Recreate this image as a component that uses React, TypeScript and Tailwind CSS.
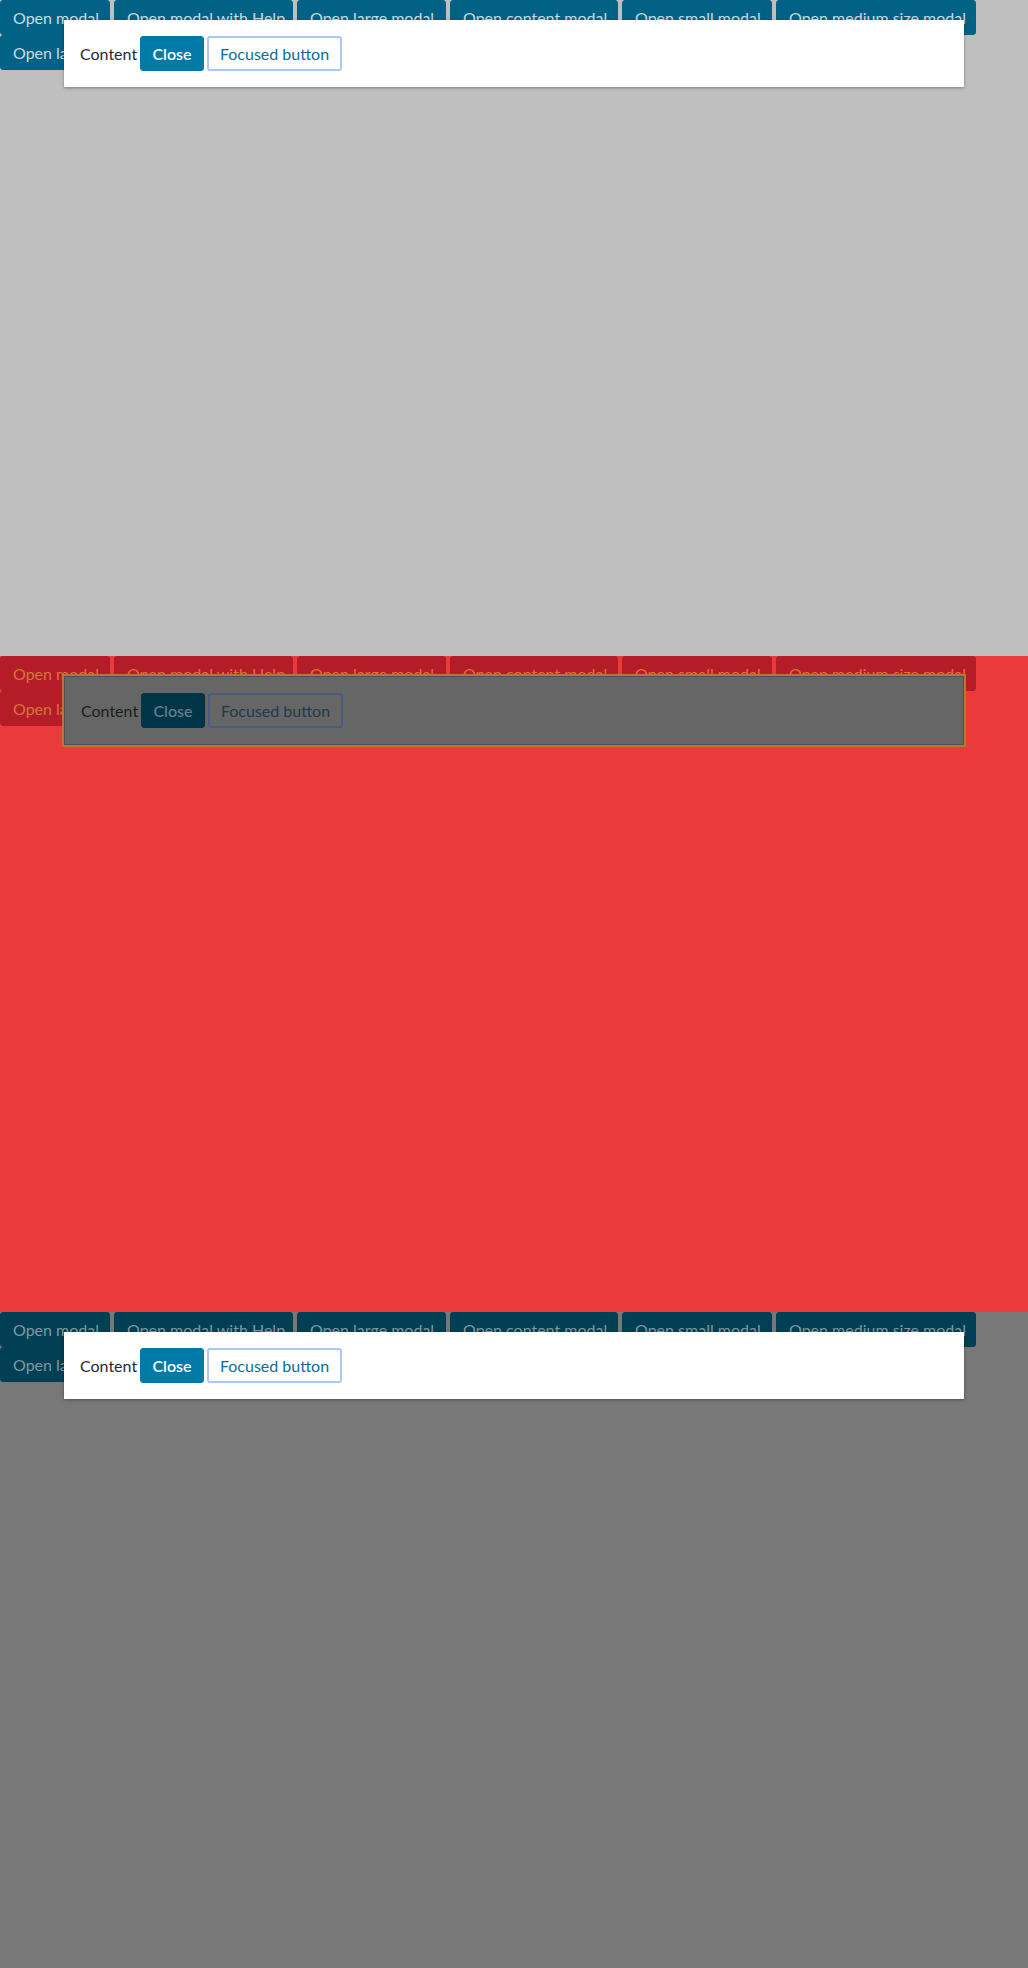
import React from 'react';

type Theme = {
  page: string;
  trigger: string;
  modal: string;
  content: string;
  close: string;
  focused: string;
};

const TRIGGERS = [
  { label: 'Open modal', width: 'w-[110px]' },
  { label: 'Open modal with Help', width: 'w-[179px]' },
  { label: 'Open large modal', width: 'w-[149px]' },
  { label: 'Open content modal', width: 'w-[168px]' },
  { label: 'Open small modal', width: 'w-[150px]' },
  { label: 'Open medium size modal', width: 'w-[200px]' },
  { label: 'Open large content modal', width: 'w-[196px]' },
];

const themes: Theme[] = [
  {
    page: 'bg-[#bfbfbf]',
    trigger: 'bg-[#016285] border-[#016285] text-[#c9dbe2]',
    modal: 'bg-white shadow-[0_1px_3px_rgba(0,0,0,0.35)]',
    content: 'text-[#1f2a33]',
    close: 'bg-[#007ba7] border-[#007ba7] text-white',
    focused: 'bg-white border-[#a8c7fa] text-[#0a6e96]',
  },
  {
    page: 'bg-[#ea3a3a]',
    trigger: 'bg-[#b41d28] border-[#b41d28] text-[#d6743a]',
    modal: 'bg-[#666666] border border-[#4b5259] outline-2 outline-[#bd7430]',
    content: 'text-[#1c1c1c]',
    close: 'bg-[#003447] border-[#003447] text-[#5f7f8c]',
    focused: 'bg-[#666666] border-[#4a5b7c] text-[#1f3a4a]',
  },
  {
    page: 'bg-[#787878]',
    trigger: 'bg-[#003f54] border-[#003f54] text-[#7f98a2]',
    modal: 'bg-white shadow-[0_1px_3px_rgba(0,0,0,0.35)]',
    content: 'text-[#1f2a33]',
    close: 'bg-[#007ba7] border-[#007ba7] text-white',
    focused: 'bg-white border-[#a8c7fa] text-[#0a6e96]',
  },
];

const ModalFrame = ({ theme }: { theme: Theme }) => {
  return (
    <section className={`relative h-[656px] overflow-hidden ${ theme.page }`}>
      {/* trigger buttons behind the open modal */}
      <div className="flex flex-wrap gap-x-[4px]">
        {TRIGGERS.map((t) => (
          <button
            key={t.label}
            type="button"
            className={`h-[35px] shrink-0 whitespace-nowrap rounded-[3px] border px-3 text-[16px] leading-[33px] ${ t.width } ${ theme.trigger }`}
          >
            {t.label}
          </button>
        ))}
      </div>

      {/* modal */}
      <div className={`absolute left-[64px] top-[20px] w-[900px] ${ theme.modal }`}>
        <div className="flex items-center gap-[3px] px-4 py-4">
          <span className={`w-[57px] whitespace-nowrap text-[16px] leading-[20px] ${ theme.content }`}>{'Content'}</span>
          <button
            type="button"
            className={`h-[35px] w-[64px] rounded-[3px] border text-[16px] font-semibold ${ theme.close }`}
          >
            {'Close'}
          </button>
          <button
            type="button"
            className={`h-[35px] w-[135px] rounded-[3px] border-2 text-[16px] ${ theme.focused }`}
          >
            {'Focused button'}
          </button>
        </div>
      </div>
    </section>
  );
};

export default function App() {
  return (
    <div className="w-[1028px] font-['Lato','Open_Sans',sans-serif]">
      {themes.map((theme, i) => (
        <ModalFrame key={i} theme={theme} />
      ))}
    </div>
  );
}
